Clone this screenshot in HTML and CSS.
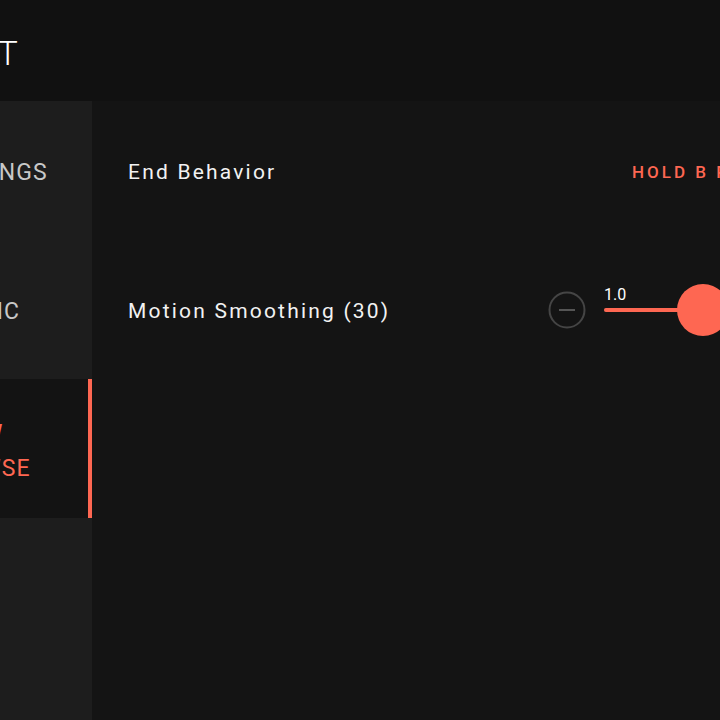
FILE: index.html
```html
<!DOCTYPE html>
<html lang="en">
<head>
<meta charset="utf-8">
<title>Settings</title>
<link rel="stylesheet" href="styles.css">
</head>
<body>
<div class="app">
  <header class="topbar">
    <h1 class="title">DEFAULT</h1>
  </header>
  <div class="main">
    <nav class="sidebar">
      <a class="nav-item">SETTINGS</a>
      <a class="nav-item">HAPTIC</a>
      <a class="nav-item active">SHOW<br>BROWSE</a>
      <div class="nav-fill"></div>
    </nav>
    <section class="content">
      <div class="row">
        <span class="label">End Behavior</span>
        <span class="value">HOLD B PRESS</span>
      </div>
      <div class="row">
        <span class="label">Motion Smoothing (30)</span>
        <div class="slider">
          <button class="step" aria-label="Decrease">
            <svg width="38" height="38" viewBox="0 0 38 38"><circle cx="19" cy="19" r="17.5" fill="none" stroke="#454545" stroke-width="2"/><line x1="11" y1="19" x2="27" y2="19" stroke="#555" stroke-width="2"/></svg>
          </button>
          <div class="track-wrap">
            <span class="track-value">1.0</span>
            <div class="track">
              <div class="track-fill" style="width: 99px"></div>
              <div class="knob" style="left: 99px"></div>
            </div>
          </div>
          <button class="step" aria-label="Increase">
            <svg width="38" height="38" viewBox="0 0 38 38"><circle cx="19" cy="19" r="17.5" fill="none" stroke="#454545" stroke-width="2"/><line x1="11" y1="19" x2="27" y2="19" stroke="#555" stroke-width="2"/><line x1="19" y1="11" x2="19" y2="27" stroke="#555" stroke-width="2"/></svg>
          </button>
        </div>
      </div>
    </section>
  </div>
</div>
</body>
</html>
```

FILE: styles.css
```css
html, body {
  margin: 0;
  padding: 0;
  height: 100%;
  overflow: hidden;
  background: #141414;
}

body {
  font-family: Roboto, "Liberation Sans", sans-serif;
  color: #f0f0f0;
}

.app {
  width: 1100px;
  margin-left: -200px;
  height: 720px;
  display: flex;
  flex-direction: column;
}

.topbar {
  height: 101px;
  flex: none;
  background: #111111;
  display: flex;
  align-items: center;
  padding-left: 71px;
}

.title {
  margin: 0;
  font-size: 34px;
  font-weight: 300;
  letter-spacing: 2px;
  color: #ffffff;
  line-height: 1;
  padding-top: 4px;
}

.main {
  flex: 1;
  display: flex;
}

.sidebar {
  width: 292px;
  flex: none;
  background: #1d1d1d;
  display: flex;
  flex-direction: column;
}

.nav-item {
  height: 139px;
  display: flex;
  align-items: center;
  padding-left: 133px;
  padding-top: 4px;
  font-size: 23px;
  font-weight: 400;
  letter-spacing: 1px;
  line-height: 35px;
  color: #c8c8c8;
  box-sizing: border-box;
}

.nav-item.active {
  background: #131313;
  color: #fe6752;
  border-right: 4px solid #fe6752;
  padding-top: 4px;
}

.nav-fill {
  flex: 1;
}

.content {
  flex: 1;
  display: flex;
  flex-direction: column;
  padding-left: 36px;
  padding-right: 117px;
}

.row {
  height: 139px;
  display: flex;
  align-items: center;
  justify-content: space-between;
}

.label {
  font-size: 21px;
  letter-spacing: 2.2px;
  color: #f2f2f2;
  padding-top: 2px;
}

.value {
  font-size: 17px;
  font-weight: 500;
  letter-spacing: 3px;
  color: #fe6752;
  padding-top: 2px;
}

.slider {
  display: flex;
  align-items: center;
  gap: 18px;
}

.step {
  width: 38px;
  height: 38px;
  padding: 0;
  border: 0;
  background: none;
  display: block;
}

.step svg {
  display: block;
}

.track-wrap {
  width: 123px;
  position: relative;
}

.track-value {
  position: absolute;
  left: 0;
  bottom: 9px;
  font-size: 16px;
  color: #ffffff;
  line-height: 1;
}

.track {
  position: relative;
  height: 4px;
  border-radius: 2px;
  background: #3a3a3a;
}

.track-fill {
  height: 4px;
  border-radius: 2px;
  background: #fe6752;
}

.knob {
  position: absolute;
  top: 50%;
  width: 52px;
  height: 52px;
  margin: -26px 0 0 -26px;
  border-radius: 50%;
  background: #fe6752;
}
```
